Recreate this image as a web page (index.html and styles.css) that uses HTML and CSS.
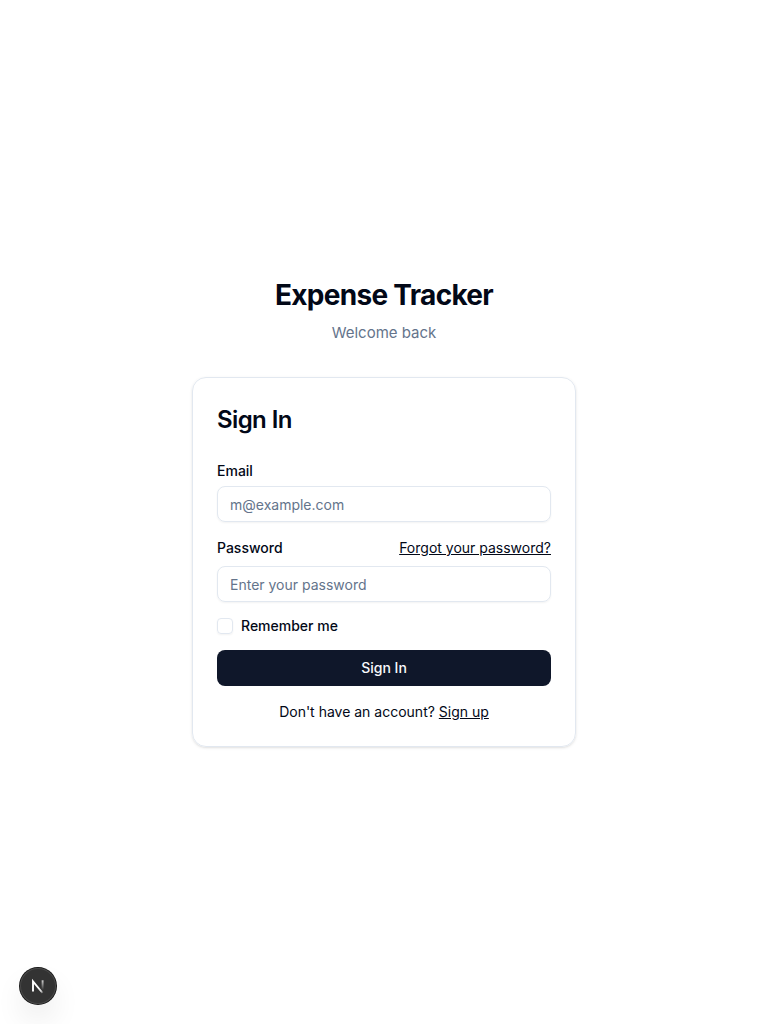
FILE: index.html
```html
<!DOCTYPE html>
<html lang="en">
<head>
<meta charset="utf-8">
<meta name="viewport" content="width=device-width, initial-scale=1">
<title>Expense Tracker</title>
<link rel="stylesheet" href="styles.css">
</head>
<body>
<main class="page">
  <div class="shell">
    <header class="intro">
      <h1 class="intro-title">Expense Tracker</h1>
      <p class="intro-text">Welcome back</p>
    </header>
    <section class="card">
      <h2 class="card-title">Sign In</h2>
      <form class="form">
        <div class="field">
          <label class="label" for="email">Email</label>
          <input class="input" id="email" type="email" placeholder="m@example.com">
        </div>
        <div class="field">
          <div class="field-head">
            <label class="label" for="password">Password</label>
            <a class="link" href="#">Forgot your password?</a>
          </div>
          <input class="input" id="password" type="password" placeholder="Enter your password">
        </div>
        <div class="remember">
          <input class="checkbox" id="remember" type="checkbox">
          <label class="label" for="remember">Remember me</label>
        </div>
        <button class="submit" type="submit">Sign In</button>
      </form>
      <p class="signup">Don't have an account? <a class="link" href="#">Sign up</a></p>
    </section>
  </div>
</main>
<button class="devtools" type="button" aria-label="Open Next.js Dev Tools">
  <svg width="40" height="40" viewBox="0 0 40 40" fill="none" aria-hidden="true">
    <defs>
      <linearGradient id="diagonal" x1="21" y1="21.500" x2="25.500" y2="27" gradientUnits="userSpaceOnUse">
        <stop stop-color="#fff"/><stop offset="0.600" stop-color="#fff" stop-opacity="0.800"/><stop offset="1" stop-color="#fff" stop-opacity="0"/>
      </linearGradient>
      <linearGradient id="stem" x1="24" y1="14" x2="24" y2="24" gradientUnits="userSpaceOnUse">
        <stop stop-color="#fff" stop-opacity="0.800"/><stop offset="1" stop-color="#fff" stop-opacity="0"/>
      </linearGradient>
    </defs>
    <path d="M15 25.500V15.300L24.600 27" stroke="url(#diagonal)" stroke-width="1.900"/>
    <path d="M24.600 14.300V24" stroke="url(#stem)" stroke-width="1.900"/>
  </svg>
</button>
</body>
</html>
```
FILE: styles.css
```css
*, *::before, *::after { box-sizing: border-box; }
body {
  margin: 0;
  background: #fff;
  color: #020817;
  font-family: Inter, "Liberation Sans", sans-serif;
  font-size: 14px;
  line-height: 20px;
}
h1, h2, p { margin: 0; }
.page {
  min-height: 100vh;
  display: flex;
  align-items: center;
  justify-content: center;
  padding: 16px;
}
.shell { width: 100%; max-width: 384px; }
.intro { text-align: center; margin-bottom: 32px; }
.intro-title { font-size: 28px; line-height: 36px; font-weight: 700; letter-spacing: -0.025em; }
.intro-text { margin-top: 8px; font-size: 15px; line-height: 24px; color: #64748b; }
.card {
  padding: 24px;
  border: 1px solid #e2e8f0;
  border-radius: 14px;
  box-shadow: 0 1px 3px rgb(0 0 0 / 10%), 0 1px 2px -1px rgb(0 0 0 / 10%);
}
.card-title { font-size: 24px; line-height: 36px; font-weight: 600; letter-spacing: -0.025em; }
.form { display: grid; gap: 16px; margin-top: 26px; }
.field { display: grid; gap: 8px; }
.field-head { display: flex; align-items: center; justify-content: space-between; }
.label { font-weight: 500; line-height: 14px; }
.link { color: inherit; text-decoration: underline; }
.input {
  width: 100%;
  height: 36px;
  padding: 4px 12px;
  border: 1px solid #e2e8f0;
  border-radius: 8px;
  background: transparent;
  box-shadow: 0 1px 2px rgb(0 0 0 / 5%);
  color: inherit;
  font: inherit;
}
.input::placeholder { color: #64748b; opacity: 1; }
.remember { display: flex; align-items: center; gap: 8px; }
.checkbox {
  appearance: none;
  width: 16px;
  height: 16px;
  margin: 0;
  border: 1px solid #e2e8f0;
  border-radius: 4px;
  box-shadow: 0 1px 2px rgb(0 0 0 / 5%);
}
.checkbox:checked { background: #0f172a; }
.submit {
  height: 36px;
  border: 0;
  border-radius: 8px;
  background: #0f172a;
  color: #f8fafc;
  font: inherit;
  font-weight: 500;
}
.signup { margin-top: 16px; text-align: center; }
.devtools {
  position: fixed;
  left: 20px;
  bottom: 20px;
  width: 36px;
  height: 36px;
  display: flex;
  align-items: center;
  justify-content: center;
  padding: 0;
  border: 0;
  border-radius: 50%;
  background: #333;
  box-shadow: 0 0 0 1px #171717, inset 0 0 0 1px #484848, 0 16px 32px -8px rgb(0 0 0 / 24%);
}
.devtools svg { flex: none; }
```
